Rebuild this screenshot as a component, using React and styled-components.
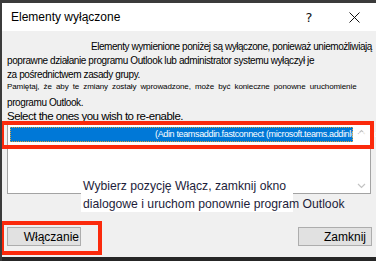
import React from "react";
import styled, { createGlobalStyle } from "styled-components";

const Global = createGlobalStyle`
  html, body { margin: 0; padding: 0; background: #262626; }
  body { font-family: "Liberation Sans", Arial, sans-serif; }
`;

const Window = styled.div`
  position: relative;
  width: 376px;
  height: 261px;
  box-sizing: border-box;
  border-top: 3px solid #3b3b3b;
  border-left: 2px solid #3b3b3b;
  display: flex;
  flex-direction: column;
  overflow: hidden;
  background: #f0f0f0;
`;

const TitleBar = styled.div`
  height: 28px;
  flex: none;
  background: #ffffff;
  display: flex;
  align-items: center;
  padding-left: 9px;
`;

const Title = styled.span`
  font-family: "Liberation Sans", Arial, sans-serif;
  font-size: 12px;
  color: #000;
  flex: 1;
`;

const TitleButton = styled.span`
  width: ${(p) => p.$w}px;
  height: 28px;
  display: flex;
  align-items: center;
  justify-content: center;
  font-family: "DejaVu Sans", sans-serif;
  font-size: 13px;
  color: #111;
`;

const Body = styled.div`
  flex: 1;
  background: #f0f0f0;
  padding: 9px 0 0 5px;
  display: flex;
  flex-direction: column;
  min-height: 0;
`;

const Line = styled.div`
  white-space: nowrap;
  font-family: "Liberation Sans", Arial, sans-serif;
  font-size: ${(p) => p.$size || 10}px;
  height: ${(p) => p.$h}px;
  line-height: ${(p) => p.$h}px;
  padding-left: ${(p) => p.$indent || 0}px;
  margin-top: ${(p) => p.$mt || 0}px;
  word-spacing: ${(p) => p.$ws || 0}px;
  letter-spacing: ${(p) => p.$ls || 0}px;
  color: #000;
`;

const ListBox = styled.div`
  width: 364px;
  height: 70px;
  box-sizing: border-box;
  border: 1px solid #a3a3a3;
  background: #fff;
  display: flex;
  flex: none;
`;

const ListItems = styled.div`
  flex: 1;
  padding: 2px 0 0 2px;
  min-width: 0;
  position: relative;
  z-index: 1;
`;

const SelectedRow = styled.div`
  height: 15px;
  background: #0078d7;
  outline: 1px dotted #d9a441;
  outline-offset: -1px;
  color: #fff;
  font-family: "Liberation Sans", Arial, sans-serif;
  font-size: 9px;
  letter-spacing: -0.35px;
  line-height: 15px;
  white-space: nowrap;
  padding-left: 145px;
  overflow: visible;
`;

const ScrollBar = styled.div`
  width: 17px;
  flex: none;
  display: flex;
  flex-direction: column;
  justify-content: space-between;
  align-items: center;
  padding: 4px 0;
  box-sizing: border-box;
`;

const ButtonRow = styled.div`
  margin-top: 33px;
  display: flex;
  justify-content: space-between;
  padding-right: 4px;
`;

const Button = styled.div`
  width: 74px;
  height: 19px;
  box-sizing: border-box;
  background: #e1e1e1;
  border: 1px solid #adadad;
  display: flex;
  align-items: center;
  justify-content: flex-end;
  padding-right: ${(p) => p.$pr}px;
  font-family: "Liberation Sans", Arial, sans-serif;
  font-size: 12px;
  color: #000;
  white-space: nowrap;
  overflow: hidden;
`;

const BottomStrip = styled.div`
  height: 4px;
  flex: none;
  background: #262626;
`;

const RedFrame = styled.div`
  position: absolute;
  left: ${(p) => p.$x}px;
  top: ${(p) => p.$y}px;
  width: ${(p) => p.$w}px;
  height: ${(p) => p.$h}px;
  box-sizing: border-box;
  border: 4px solid #fb2a0c;
  pointer-events: none;
  z-index: 3;
`;

const Callout = styled.div`
  position: absolute;
  left: 79px;
  top: 174px;
  width: 212px;
  height: 35px;
  background: #fff;
  font-family: "Liberation Sans", Arial, sans-serif;
  font-size: 12.2px;
  line-height: 18px;
  color: #1d1d3a;
  white-space: nowrap;
  padding-left: 2px;
  box-sizing: border-box;
  z-index: 2;
`;

const Arrow = ({ up }) => (
  <svg width="9" height="6" viewBox="0 0 9 6">
    <polyline
      points={up ? "1,5 4.5,1.5 8,5" : "1,1 4.5,4.5 8,1"}
      fill="none"
      stroke="#c3c3c3"
      strokeWidth="1.2"
    />
  </svg>
);

export default function App() {
  return (
    <>
      <Global />
      <Window>
        <TitleBar>
          <Title>Elementy wyłączone</Title>
          <TitleButton $w={46}>?</TitleButton>
          <TitleButton $w={44}>
            <svg width="11" height="11" viewBox="0 0 11 11">
              <path d="M0.5 0.5 L10.5 10.5 M10.5 0.5 L0.5 10.5" stroke="#111" strokeWidth="1" />
            </svg>
          </TitleButton>
        </TitleBar>
        <Body>
          <Line $h={14} $indent={84} $ls={-0.45}>
            Elementy wymienione poniżej są wyłączone, ponieważ uniemożliwiają
          </Line>
          <Line $h={14} $ls={-0.4}>
            poprawne działanie programu Outlook lub administrator systemu wyłączył je
          </Line>
          <Line $h={13} $ls={-0.4}>za pośrednictwem zasady grupy.</Line>
          <Line $h={12} $size={8} $ws={2} $ls={-0.1}>
            Pamiętaj, że aby te zmiany zostały wprowadzone, może być konieczne ponowne uruchomienie
          </Line>
          <Line $h={13} $mt={3} $ls={-0.4}>programu Outlook.</Line>
          <Line $h={15} $size={11.5} $ls={-0.5}>Select the ones you wish to re-enable.</Line>
          <ListBox>
            <ListItems>
              <SelectedRow>(Adin teamsaddin.fastconnect (microsoft.teams.addinloader.dll</SelectedRow>
            </ListItems>
            <ScrollBar>
              <Arrow up />
              <Arrow />
            </ScrollBar>
          </ListBox>
          <ButtonRow>
            <Button $pr={1}>Włączanie</Button>
            <Button $pr={5}>Zamknij</Button>
          </ButtonRow>
        </Body>
        <BottomStrip />
        <Callout>
          Wybierz pozycję Włącz, zamknij okno
          <br />
          dialogowe i uruchom ponownie program Outlook
        </Callout>
        <RedFrame $x={-2} $y={118} $w={374} $h={28} />
        <RedFrame $x={-2} $y={218} $w={102} $h={34} />
      </Window>
    </>
  );
}
